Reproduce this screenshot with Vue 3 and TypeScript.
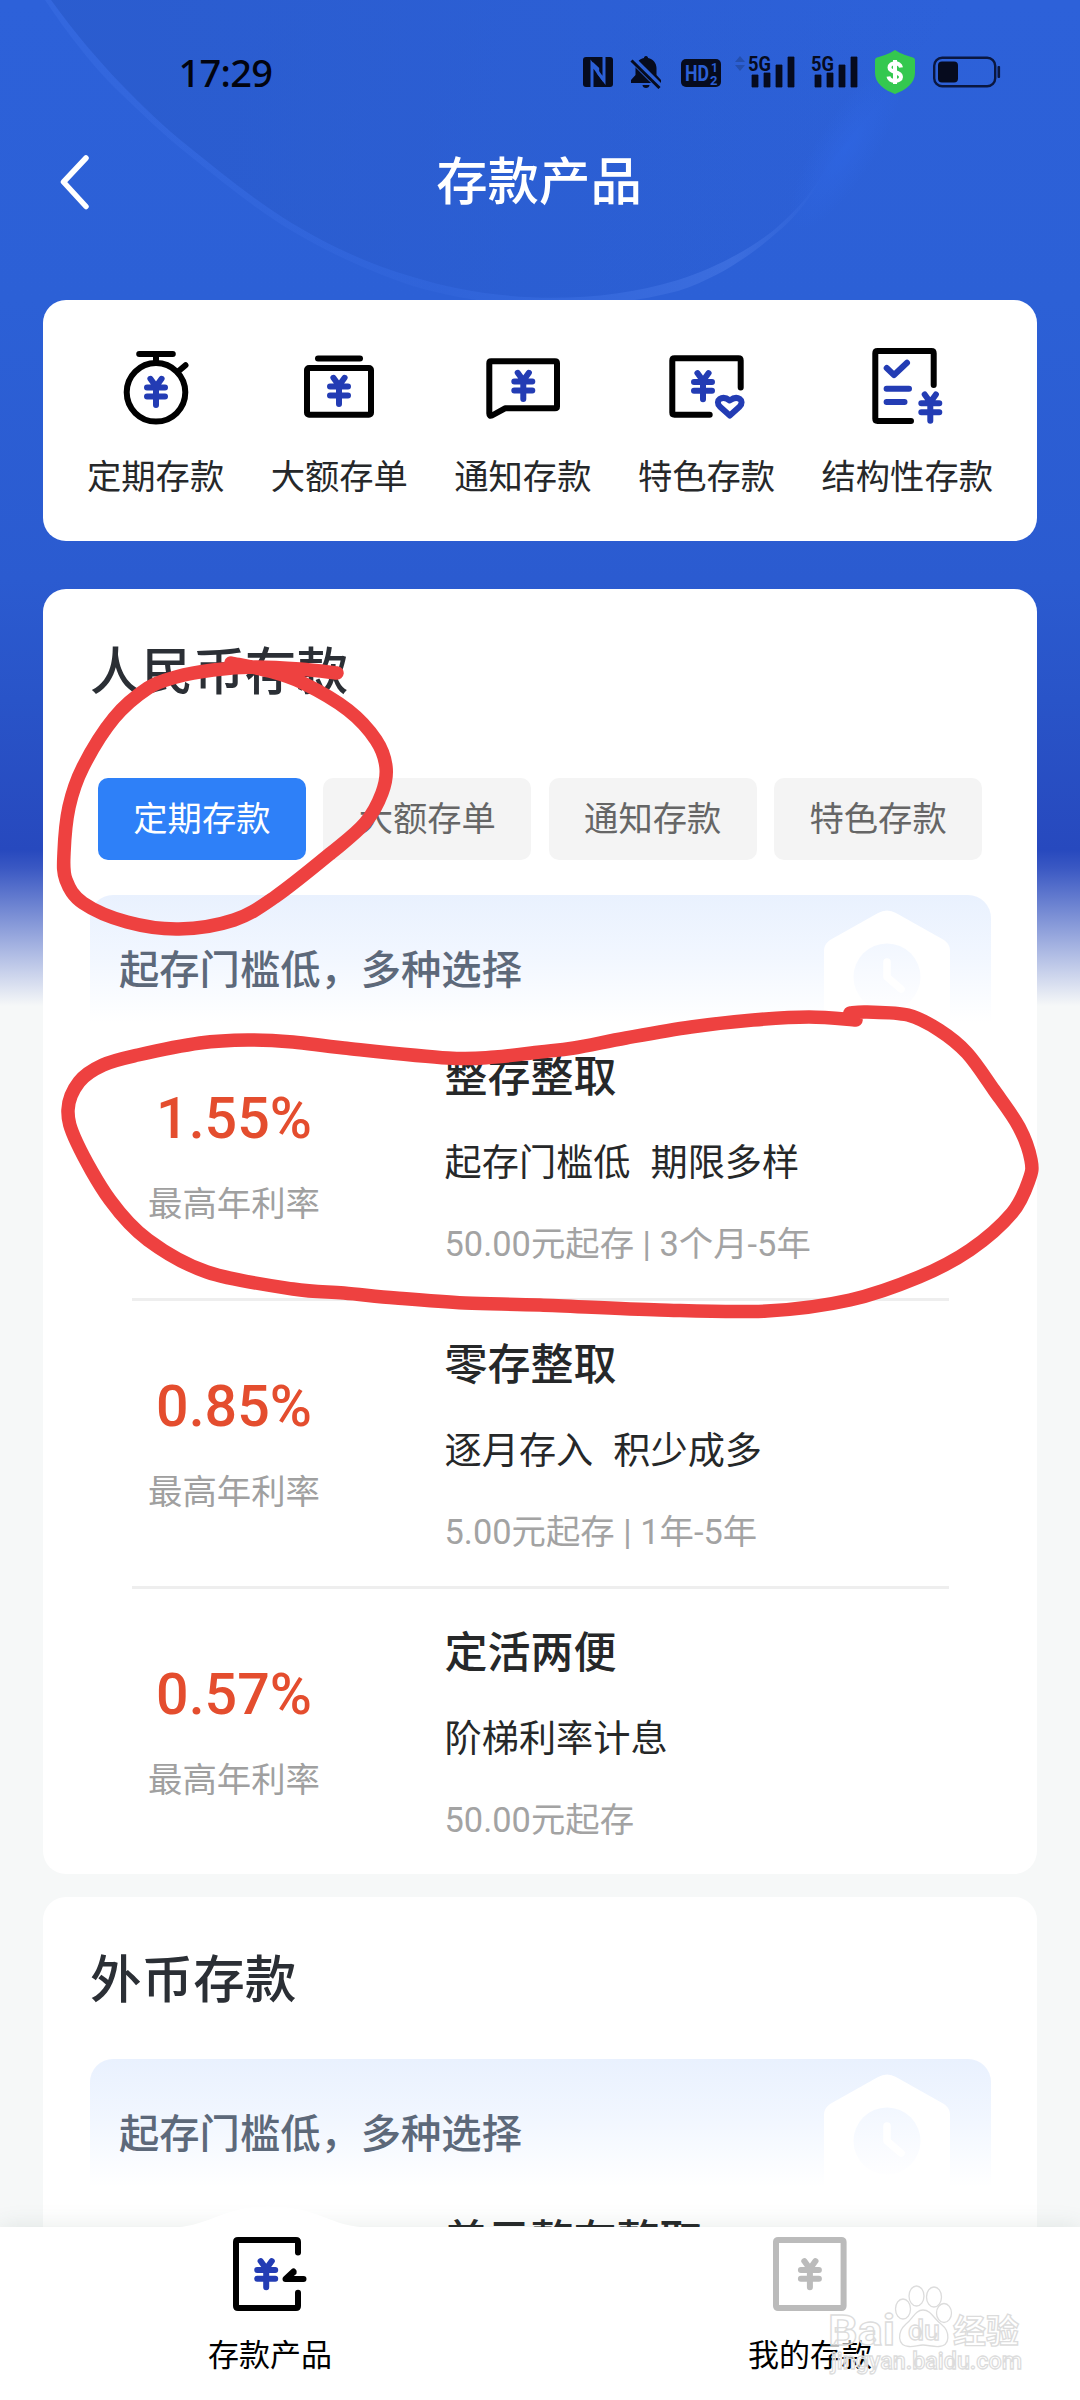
<script setup lang="ts">
import { computed } from 'vue'

type Point = [number, number]

interface Category {
  label: string
  icon: 'watch' | 'certificate' | 'notice' | 'special' | 'structured'
}

interface Product {
  rate: string
  name: string
  desc: string
  terms: string
}

const categories: Category[] = [
  { label: '定期存款', icon: 'watch' },
  { label: '大额存单', icon: 'certificate' },
  { label: '通知存款', icon: 'notice' },
  { label: '特色存款', icon: 'special' },
  { label: '结构性存款', icon: 'structured' },
]

const tabs: string[] = ['定期存款', '大额存单', '通知存款', '特色存款']

const products: Product[] = [
  { rate: '1.55%', name: '整存整取', desc: '起存门槛低  期限多样', terms: '50.00元起存 | 3个月-5年' },
  { rate: '0.85%', name: '零存整取', desc: '逐月存入  积少成多', terms: '5.00元起存 | 1年-5年' },
  { rate: '0.57%', name: '定活两便', desc: '阶梯利率计息', terms: '50.00元起存' },
]

const yen = 'M-5.6 -13.2L0 -5.5L5.6 -13.2M-9 -4.4H9M-9 4.5H9M0 -5.5V13'

// Hand-drawn marks, as the points the pen passed through
const tabMark: Point[] = [
  [337, 673], [300, 669], [255, 667], [213, 670], [176, 677], [148, 688], [114, 718], [83, 767], [69, 807],
  [64, 853], [66, 880], [83, 903], [127, 922], [179, 929], [234, 920], [275, 897], [331, 853], [365, 823],
  [382, 793], [386, 767], [376, 740], [348, 710], [303, 683], [269, 671], [231, 663],
]
const rowMark: Point[] = [
  [856, 1020], [809, 1017], [753, 1020], [691, 1027], [626, 1038], [574, 1048], [540, 1052], [495, 1057],
  [448, 1058], [344, 1048], [293, 1042], [248, 1040], [200, 1043], [138, 1055], [103, 1065], [79, 1082],
  [68, 1110], [77, 1143], [110, 1200], [148, 1240], [207, 1272], [293, 1289], [344, 1293], [396, 1298],
  [465, 1303], [540, 1305], [660, 1310], [767, 1311], [850, 1300], [919, 1277], [970, 1250], [1012, 1213],
  [1029, 1180], [1031, 1160], [1019, 1127], [994, 1090], [967, 1053], [939, 1030], [908, 1015], [867, 1012],
  [850, 1013],
]

function smooth(pts: Point[]): string {
  let d = `M${pts[0][0]} ${pts[0][1]}`
  for (let i = 0; i < pts.length - 1; i++) {
    const a = pts[Math.max(0, i - 1)]
    const b = pts[i]
    const c = pts[i + 1]
    const e = pts[Math.min(pts.length - 1, i + 2)]
    d += `C${b[0] + (c[0] - a[0]) / 6} ${b[1] + (c[1] - a[1]) / 6} ${c[0] - (e[0] - b[0]) / 6} ${c[1] - (e[1] - b[1]) / 6} ${c[0]} ${c[1]}`
  }
  return d
}

const marks = computed<string[]>(() => [smooth(tabMark), smooth(rowMark)])
</script>

<template>
  <div class="phone">
    <svg class="backdrop" viewBox="0 0 1080 590" width="1080" height="590">
      <defs>
        <linearGradient id="edge" x1="0" y1="0" x2="1" y2="0">
          <stop offset="0" stop-color="#4a7df0" stop-opacity="0.22" />
          <stop offset="0.5" stop-color="#4a7df0" stop-opacity="0.12" />
          <stop offset="0.88" stop-color="#6a95f5" stop-opacity="0.25" />
          <stop offset="1" stop-color="#6a95f5" stop-opacity="0" />
        </linearGradient>
        <radialGradient id="glow">
          <stop offset="0" stop-color="#2f68e8" stop-opacity="0.5" />
          <stop offset="1" stop-color="#2f68e8" stop-opacity="0" />
        </radialGradient>
        <linearGradient id="disc" x1="0" y1="0" x2="1" y2="0">
          <stop offset="0.1" stop-color="#2a5bcc" stop-opacity="0.75" />
          <stop offset="1" stop-color="#2a5bcc" stop-opacity="0" />
        </linearGradient>
        <linearGradient id="dial" x1="0" y1="0" x2="0" y2="1">
          <stop offset="0" stop-color="#f2f7ff" />
          <stop offset="1" stop-color="#fefeff" />
        </linearGradient>
      </defs>
      <path d="M51 0C74 32 98 60 120 83C142 106 165 128 189 147C219 171 249 196 282 217C325 244 365 263 413 277C490 301 590 307 678 280C718 267 750 249 774 230C800 208 815 188 826 168L960 0Z" fill="url(#disc)" />
      <path d="M51 0C74 32 98 60 120 83C142 106 165 128 189 147C219 171 249 196 282 217C325 244 365 263 413 277C490 301 590 307 678 280C718 267 750 249 774 230C800 208 815 188 826 168C815 192 798 216 774 235C750 256 718 278 678 291C590 314 490 309 413 286C365 270 325 251 282 225C249 204 219 179 189 155C165 136 142 114 115 88C92 65 67 33 45 0Z" fill="url(#edge)" />
      <ellipse cx="846" cy="148" rx="30" ry="95" transform="rotate(32 846 148)" fill="url(#glow)" />
    </svg>

    <header class="status">
      <span class="time">17:29</span>
      <svg class="nfc" width="30" height="30" viewBox="0 0 30 30">
        <rect width="30" height="30" rx="3" fill="#060b1e" />
        <path d="M9 30V7L21 23.500V0" fill="none" stroke="#2c60d6" stroke-width="3" />
        <path d="M9 6L15 11.500V16L21 24" fill="none" stroke="#2c60d6" stroke-width="2.400" />
      </svg>
      <svg class="bell" width="32" height="34" viewBox="0 0 32 34">
        <path d="M16 1C17.500 1 18 2 18 3C23 4 26.500 8 26.500 13V20L31 25V28H1V25L5.500 20V13C5.500 8 9 4 14 3C14 2 14.500 1 16 1ZM12.500 30H19.500C19.500 34 12.500 34 12.500 30Z" fill="#060b1e" />
        <path d="M0 2L31 33" stroke="#2c60d6" stroke-width="7" />
        <path d="M1.500 5.500L29.500 33" stroke="#060b1e" stroke-width="3" />
      </svg>
      <svg class="hd" width="40" height="28" viewBox="0 0 40 28">
        <rect width="40" height="28" rx="5" fill="#060b1e" />
        <text x="4" y="22" font-size="22" font-weight="700" textLength="24" lengthAdjust="spacingAndGlyphs" fill="#2c60d6">HD</text>
        <text x="30" y="13" font-size="12" font-weight="700" fill="#2c60d6">1</text>
        <text x="29" y="25.500" font-size="13" font-weight="700" fill="#2c60d6">2</text>
      </svg>
      <svg class="signal" width="62" height="42" viewBox="0 -4 62 42">
        <path d="M1 7L6 1L11 7ZM1 10H11L6 16Z" fill="#244fae" />
        <text x="14" y="15.500" font-size="21" font-weight="700" textLength="23" lengthAdjust="spacingAndGlyphs" fill="#060b1e">5G</text>
        <path d="M18 20h6v12h-6zM30 18h6v14h-6zM42 10h6v22h-6zM54 2h6v30h-6z" fill="#060b1e" stroke="#060b1e" stroke-width="0.8" stroke-linejoin="round" />
      </svg>
      <svg class="signal2" width="49" height="42" viewBox="13 -4 49 42">
        <text x="14" y="15.500" font-size="21" font-weight="700" textLength="23" lengthAdjust="spacingAndGlyphs" fill="#060b1e">5G</text>
        <path d="M18 20h6v12h-6zM30 18h6v14h-6zM42 10h6v22h-6zM54 2h6v30h-6z" fill="#060b1e" stroke="#060b1e" stroke-width="0.8" stroke-linejoin="round" />
      </svg>
      <svg class="shield" width="40" height="44" viewBox="0 0 40 44">
        <path d="M20 0C26 4 33 6 38 7.500Q40 8 40 10V23C40 33 31 40 20 44C9 40 0 33 0 23V10Q0 8 2 7.500C7 6 14 4 20 0Z" fill="#34c84f" />
        <path d="M20 10V34M26 17.500C25 11.500 14.500 12 14.500 17.500C14.500 23.500 26 20.500 26 27C26 32 14.500 32.500 13.500 26.500" fill="none" stroke="#fff" stroke-width="4" />
      </svg>
      <svg class="battery" width="68" height="32" viewBox="0 0 68 32">
        <rect x="1.200" y="1.700" width="61" height="28.500" rx="8" fill="none" stroke="#0a1740" stroke-width="2.400" />
        <rect x="5" y="5.500" width="20" height="21" rx="4" fill="#060b1e" />
        <rect x="64.500" y="10" width="2.600" height="12" rx="1" fill="#0a1740" />
      </svg>
    </header>

    <nav class="titlebar">
      <svg class="back" width="34" height="56" viewBox="0 0 34 56">
        <path d="M28 4L5.500 28L28 52.500" fill="none" stroke="#fff" stroke-width="5.500" stroke-linecap="round" stroke-linejoin="round" />
      </svg>
      <h1>存款产品</h1>
    </nav>

    <main class="content">
      <section class="card categories">
        <div v-for="c in categories" :key="c.label" class="category">
          <svg width="80" height="80" viewBox="0 0 80 80" class="line-icon">
            <template v-if="c.icon === 'watch'">
              <circle cx="40" cy="45.300" r="29.300" />
              <path d="M23.200 7H56.800M40 7V15M61.500 25L69.500 18.300" />
              <path :d="yen" transform="translate(40 45)" class="blue" />
            </template>
            <template v-else-if="c.icon === 'certificate'">
              <path d="M19 11.500H61" />
              <rect x="8" y="21" width="64" height="46.700" rx="2" />
              <path :d="yen" transform="translate(40 44)" class="blue" />
            </template>
            <template v-else-if="c.icon === 'notice'">
              <path d="M8 14.300H72Q74 14.300 74 16.300V59.500Q74 61.300 72 61.300H22L9 68.500Q6.300 69.500 6.300 66.500V16.300Q6.300 14.300 8 14.300Z" />
              <path :d="yen" transform="translate(40.300 39)" class="blue" />
            </template>
            <template v-else-if="c.icon === 'special'">
              <path d="M74.700 40.500V13.500Q74.700 11.300 72.500 11.300H8.500Q6.300 11.300 6.300 13.500V65.500Q6.300 67.700 8.500 67.700H43.700" />
              <path :d="yen" transform="translate(37 39.300)" class="blue" />
              <path d="M63.800 68.500L54 59.800C48 53.500 56 47.500 63.800 53.500C71.500 47.500 79.500 53.500 73.500 59.800Z" class="blue" />
            </template>
            <template v-else>
              <path d="M66.700 38V6.300Q66.700 4.100 64.500 4.100H10.500Q8.300 4.100 8.300 6.300V71.700Q8.300 73.900 10.500 73.900H44" />
              <path d="M19.700 21L27 28L40 15.700M19.600 41.700H42M19.600 55H37.500" class="blue" />
              <path :d="yen" transform="translate(63.300 60.700)" class="blue" />
            </template>
          </svg>
          <span>{{ c.label }}</span>
        </div>
      </section>

      <section class="card rmb">
        <h2>人民币存款</h2>
        <div class="tabs">
          <span v-for="(t, i) in tabs" :key="t" class="tab" :class="{ active: i === 0 }">{{ t }}</span>
        </div>
        <div class="banner">
          <span>起存门槛低，多种选择</span>
          <svg width="126" height="113" viewBox="0 0 126 113">
            <path d="M54 3Q63 -2 72 3L120 30Q126 34 126 41V113H0V41Q0 34 6 30Z" fill="#fff" />
            <circle cx="63" cy="67" r="33.500" fill="url(#dial)" />
            <path d="M63 52V67L77 79" fill="none" stroke="#fff" stroke-width="7.500" stroke-linecap="round" stroke-linejoin="round" />
          </svg>
        </div>
        <div class="products">
          <article v-for="p in products" :key="p.name" class="product">
            <div class="yield">
              <strong>{{ p.rate }}</strong>
              <span>最高年利率</span>
            </div>
            <div class="info">
              <h3>{{ p.name }}</h3>
              <p class="desc">{{ p.desc }}</p>
              <p class="terms">{{ p.terms }}</p>
            </div>
          </article>
        </div>
      </section>

      <section class="card foreign">
        <h2>外币存款</h2>
        <div class="banner">
          <span>起存门槛低，多种选择</span>
          <svg width="126" height="113" viewBox="0 0 126 113">
            <path d="M54 3Q63 -2 72 3L120 30Q126 34 126 41V113H0V41Q0 34 6 30Z" fill="#fff" />
            <circle cx="63" cy="67" r="33.500" fill="url(#dial)" />
            <path d="M63 52V67L77 79" fill="none" stroke="#fff" stroke-width="7.500" stroke-linecap="round" stroke-linejoin="round" />
          </svg>
        </div>
        <div class="products">
          <article class="product">
            <div class="yield"></div>
            <div class="info"><h3>美元整存整取</h3></div>
          </article>
        </div>
      </section>
    </main>

    <footer class="tabbar">
      <svg class="bump" width="220" height="24" viewBox="0 0 220 24">
        <path d="M10 22.500C50 22.500 60 1.500 110 1.500C160 1.500 170 22.500 210 22.500V24H10Z" fill="#fff" />
      </svg>
      <div class="item">
        <svg width="80" height="80" viewBox="0 0 80 80" class="line-icon">
          <path d="M68 18.500V8Q68 5.900 66 5.900H8Q6 5.900 6 8V72Q6 74 8 74H66Q68 74 68 72V58.800" />
          <path :d="yen" transform="translate(36.200 40.300)" class="blue" />
          <path d="M73.500 44.900H55.500L63.500 37.500M56.500 44L63.500 38.500" />
        </svg>
        <span>存款产品</span>
      </div>
      <div class="item">
        <svg width="80" height="80" viewBox="0 0 80 80" class="line-icon muted">
          <rect x="6" y="5.900" width="67.600" height="68.200" rx="2" />
          <path :d="yen" transform="translate(39.900 40.300)" />
        </svg>
        <span>我的存款</span>
      </div>
      <svg class="watermark" width="204" height="98" viewBox="0 0 204 98">
        <g fill="#fff" fill-opacity="0.6" stroke="#dcdcdc" stroke-width="1.300">
          <ellipse cx="75" cy="28" rx="7.500" ry="10" />
          <ellipse cx="88.500" cy="15" rx="7.500" ry="10" />
          <ellipse cx="106" cy="16" rx="7.500" ry="10" />
          <ellipse cx="116" cy="32" rx="7.500" ry="9.500" />
          <path d="M95 29C103 29 106 38 113 43C123 51 122 65 111 65.500C105 66 100 64 95 64C90 64 86 66 81 65.500C69 65 69 51 78 43C85 38 87 29 95 29Z" />
          <text x="0" y="64" font-size="43" font-weight="700" textLength="67" lengthAdjust="spacingAndGlyphs">Bai</text>
          <text x="80" y="59" font-size="28" font-weight="500" textLength="32" lengthAdjust="spacingAndGlyphs">du</text>
          <text x="125" y="62" font-size="33" font-weight="700" textLength="66" lengthAdjust="spacingAndGlyphs">经验</text>
          <text x="3" y="88" font-size="24" font-weight="500" textLength="191" lengthAdjust="spacingAndGlyphs">jingyan.baidu.com</text>
        </g>
      </svg>
    </footer>

    <svg class="marks" width="1080" height="2400" viewBox="0 0 1080 2400">
      <path v-for="(d, i) in marks" :key="i" :d="d" />
    </svg>
  </div>
</template>

<style>
body {
  margin: 0;
}
</style>

<style scoped>
.phone {
  position: relative;
  display: flex;
  flex-direction: column;
  width: 1080px;
  height: 2400px;
  overflow: hidden;
  font-family: Roboto, "Noto Sans CJK SC", sans-serif;
  background: linear-gradient(#2d61d9 0, #2c60d6 300px, #2b5bd0 580px, #2954c8 700px, #2749be 850px, #3a58c3 868px, #f6f8f8 1006px);
}
.backdrop {
  position: absolute;
  left: 0;
  top: 0;
}
h1, h2, h3, p {
  margin: 0;
  font-weight: 500;
  white-space: pre;
}
svg {
  display: block;
  flex: none;
}

.status {
  position: relative;
  display: flex;
  align-items: center;
  height: 144px;
  flex: none;
  box-sizing: border-box;
  padding-left: 178.500px;
}
.time {
  width: 404px;
  font-family: "Noto Sans", sans-serif;
  font-size: 38px;
  font-weight: 500;
  line-height: 44px;
  letter-spacing: -0.700px;
  color: #02040f;
}
.bell { margin-left: 17px; }
.hd { margin: 2px 0 0 19px; }
.signal { margin-left: 13px; }
.signal2 { margin-left: 14px; }
.shield { margin-left: 16.500px; }
.battery { margin-left: 18px; }

.titlebar {
  position: relative;
  display: flex;
  align-items: center;
  height: 76px;
  flex: none;
  padding: 0 58px;
}
h1 {
  flex: 1;
  padding: 2px 36px 0 0;
  text-align: center;
  font-size: 51.400px;
  line-height: 76px;
  color: #fff;
}

.content {
  position: relative;
  flex: 1;
  min-height: 0;
  overflow: hidden;
  padding: 80px 43px 0;
}
.card {
  background: #fff;
  border-radius: 23px;
}
.categories {
  display: flex;
  justify-content: space-between;
  box-sizing: border-box;
  height: 241px;
  padding: 47px 44px 0;
}
.category {
  display: flex;
  flex-direction: column;
  align-items: center;
  gap: 25px;
  font-size: 34.300px;
  line-height: 50px;
  color: #26282a;
}
.line-icon {
  fill: none;
  stroke: #000;
  stroke-width: 6;
  stroke-linecap: round;
  stroke-linejoin: round;
}
.line-icon .blue { stroke: #233cb4; }
.line-icon.muted { stroke: #bbb; }

.rmb {
  margin-top: 48px;
  height: 1285px;
}
.rmb, .foreign {
  box-sizing: border-box;
  padding: 48px 46px 0 47px;
}
h2 {
  font-size: 51.600px;
  line-height: 72px;
  color: #2b2f35;
}
.tabs {
  display: flex;
  gap: 17.600px;
  margin: 69px 9px 35.500px 8px;
}
.tab {
  flex: 1;
  height: 81.500px;
  border-radius: 10px;
  background: #f4f4f4;
  text-align: center;
  font-size: 34.300px;
  line-height: 83px;
  color: #666;
}
.tab.active {
  background: #2e80f8;
  color: #fff;
}
.banner {
  display: flex;
  justify-content: space-between;
  box-sizing: border-box;
  height: 128px;
  padding: 15px 41px 0 29px;
  border-radius: 23px 23px 0 0;
  background: linear-gradient(#e9f1fe, #f2f7ff 50%, #fff);
  font-size: 40.300px;
  line-height: 121px;
  font-weight: 500;
  color: #5d697a;
}

.product {
  display: flex;
  position: relative;
  height: 288px;
  margin: 0 42px;
  box-sizing: border-box;
  border-bottom: 3px solid #eee;
}
.products { margin-top: -10px; }
.product:last-child { border-bottom: 0; }
.yield {
  display: flex;
  flex-direction: column;
  align-items: center;
  width: 204px;
  padding-top: 66px;
  font-size: 34.400px;
  line-height: 50px;
  color: #a0a0a0;
}
.yield strong {
  font-size: 57.300px;
  line-height: 80px;
  font-weight: 500;
  color: #e44d2e;
}
.yield span { margin-top: 20px; }
.info {
  padding: 34px 0 0 108.500px;
}
h3 {
  font-size: 43px;
  line-height: 60px;
  color: #262829;
}
.desc {
  margin-top: 29px;
  font-size: 37.200px;
  font-weight: 400;
  line-height: 54px;
  word-spacing: 0.8px;
  color: #262829;
}
.terms {
  margin-top: 29px;
  font-size: 34.400px;
  font-weight: 400;
  line-height: 50px;
  color: #a3a3a3;
}

.foreign { margin-top: 23px; }
.foreign h2 { margin-bottom: 42px; }

.tabbar {
  position: relative;
  display: flex;
  flex: none;
  height: 173px;
  background: #fff;
  box-shadow: 0 0 22px rgba(60, 90, 80, 0.13);
}
.bump {
  position: absolute;
  left: 160px;
  top: -22px;
}
.item {
  position: relative;
  flex: 1;
  display: flex;
  flex-direction: column;
  align-items: center;
  padding-top: 7px;
  font-size: 31px;
  line-height: 46px;
  color: #000;
}
.item span { margin-top: 19px; }
.watermark {
  position: absolute;
  left: 828px;
  top: 54px;
}
.marks {
  position: absolute;
  left: 0;
  top: 0;
  fill: none;
  stroke: #ee4140;
  stroke-width: 13.500;
  stroke-linecap: round;
  stroke-linejoin: round;
  pointer-events: none;
}
</style>
